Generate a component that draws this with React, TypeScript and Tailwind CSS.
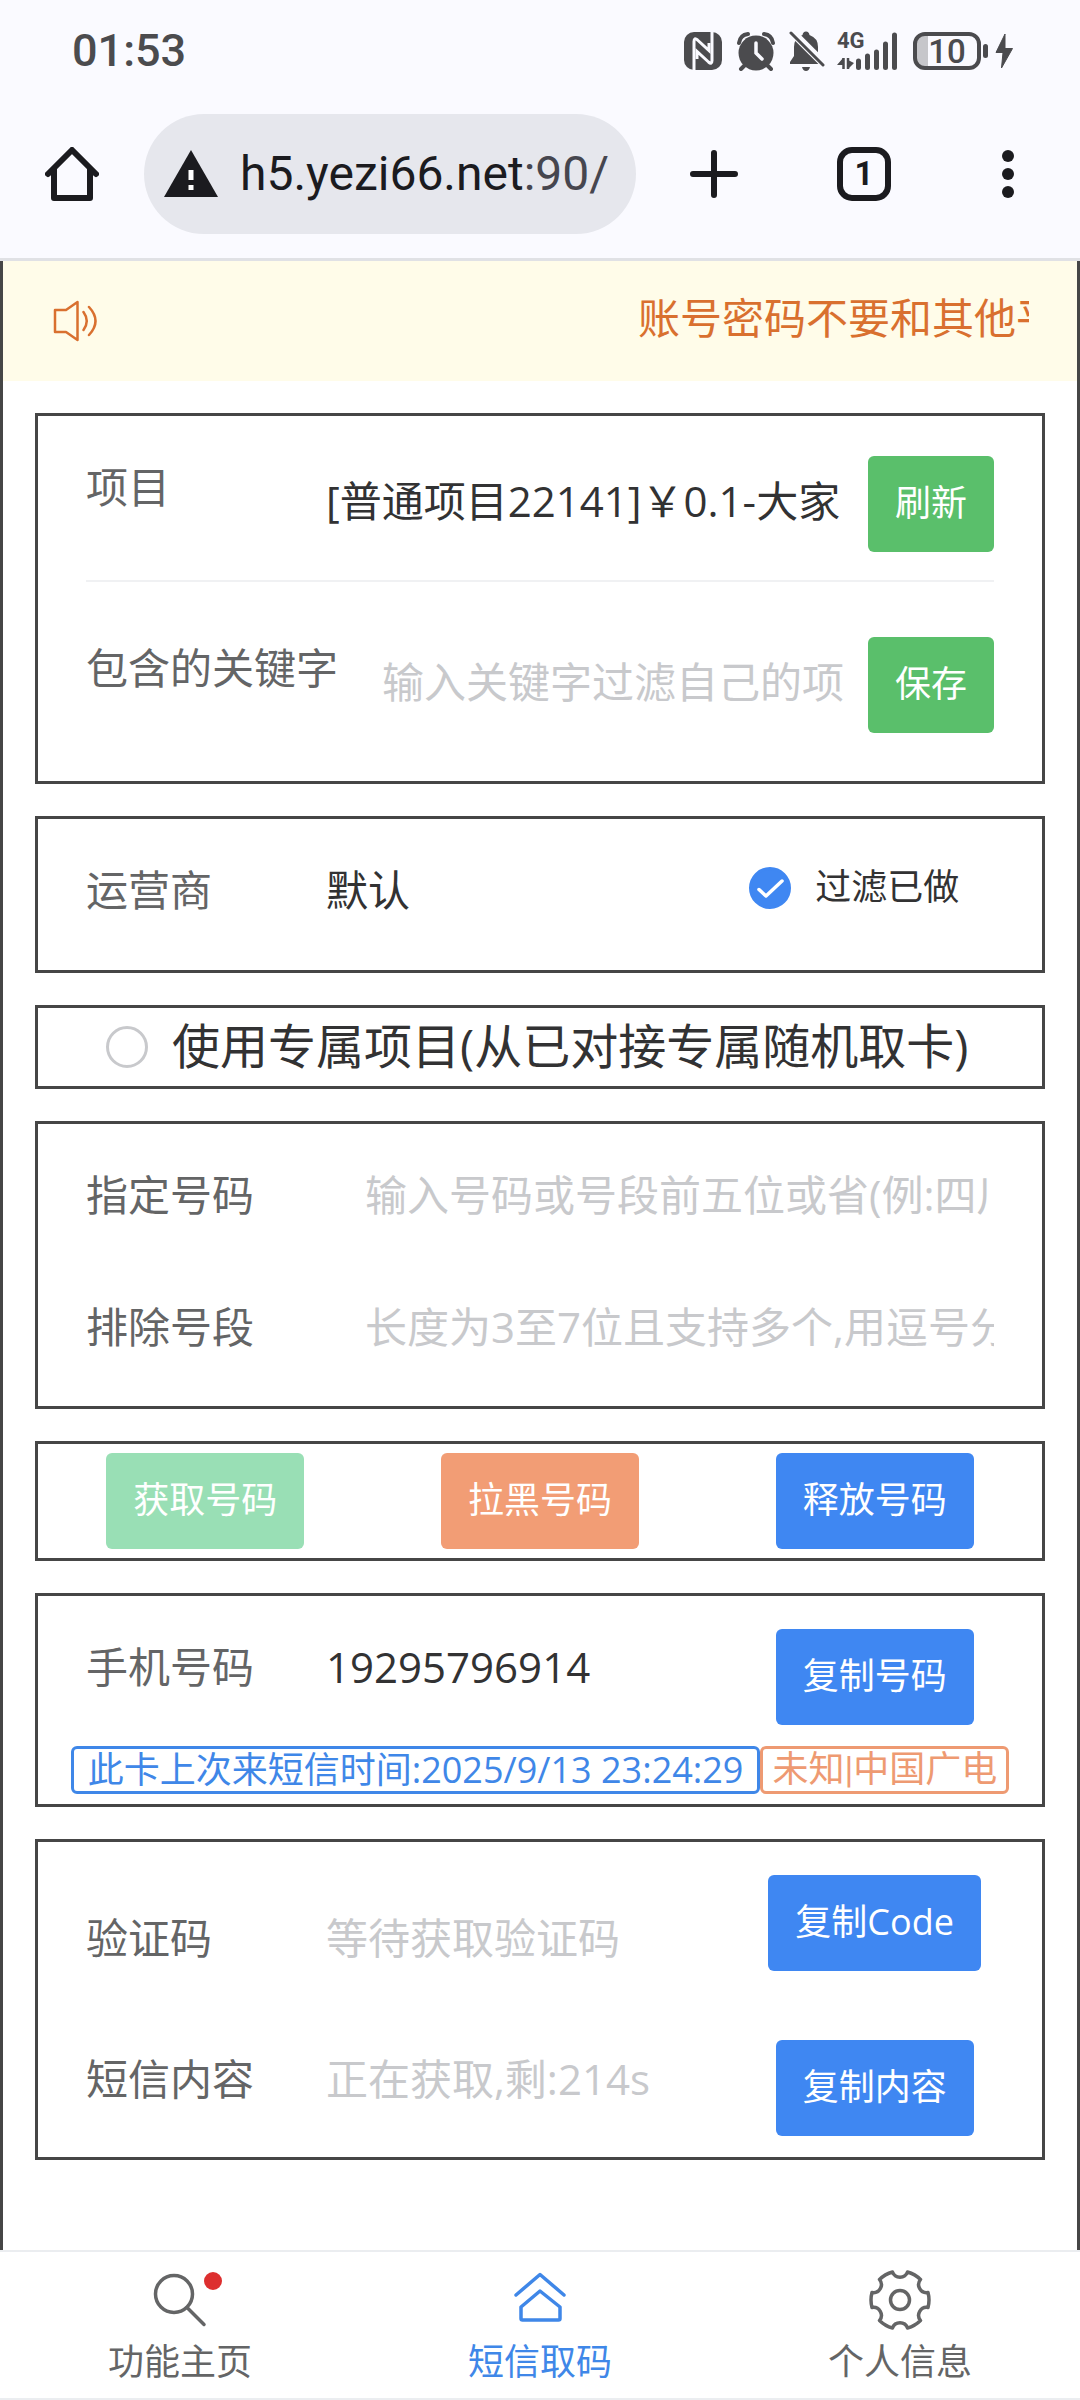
import React, { FunctionComponent, ReactNode, useState } from "react";

interface ChildrenProps {
  children: ReactNode;
}

interface ActionButtonProps {
  label: string;
  color: string;
  disabled?: boolean;
}

interface CheckProps {
  id: string;
  label: string;
  checked: boolean;
  onChange: () => void;
  textClass: string;
}

const labelClass = "shrink-0 text-[42px] text-[#646566]";
const inputClass =
  "min-w-0 flex-1 bg-transparent text-[42px] text-[#323233] outline-none placeholder:text-[#c8c9cc] placeholder:opacity-100";
const selectClass =
  "min-w-0 flex-1 appearance-none overflow-hidden bg-transparent text-[42px] text-[#323233] outline-none";

const StatusBar: FunctionComponent = () => (
  <div className="flex h-[102px] items-center pl-[72px] pr-[66px] text-[#4b4b4e]">
    <div className="text-[45px] font-medium">01:53</div>
    <div className="ml-auto flex items-center">
      {/* nfc */}
      <svg className="h-[38px] w-[40px]" viewBox="0 0 40 38" fill="none">
        <rect x="1" y="0" width="38" height="38" rx="10" fill="currentColor" />
        <path
          d="M11 39V9.500Q11 5 14.500 8L26 18.500V11"
          stroke="#fafaff"
          strokeWidth="3"
        />
        <path
          d="M29 -1V28.500Q29 33 25.500 30L14 19.500V27"
          stroke="#fafaff"
          strokeWidth="3"
        />
      </svg>
      {/* alarm clock */}
      <svg
        className="ml-[14px] h-[40px] w-[38px]"
        viewBox="0 0 38 40"
        fill="none"
      >
        <circle cx="19" cy="22" r="17.500" fill="currentColor" />
        <path
          d="M2 12Q3 4 11 3M36 12Q35 4 27 3M8 34L4 38M30 34L34 38"
          stroke="currentColor"
          strokeWidth="4"
          strokeLinecap="round"
        />
        <path
          d="M19 12V22L25 28"
          stroke="#fafaff"
          strokeWidth="3.500"
          strokeLinecap="round"
        />
      </svg>
      {/* muted bell */}
      <svg
        className="ml-[14px] h-[42px] w-[36px]"
        viewBox="0 0 36 42"
        fill="none"
      >
        <path
          d="M13.500 5Q14 1.500 17 1.500T20.500 5Q29 8 29 17V26L33 32V34H1V32L5 26V17Q5 8 13.500 5Z"
          fill="currentColor"
        />
        <path d="M13 37H21Q20 41 17 41T13 37Z" fill="currentColor" />
        <path d="M0 -1L36 35" stroke="#fafaff" strokeWidth="8" />
        <path
          d="M2 3L34 35"
          stroke="currentColor"
          strokeWidth="3"
          strokeLinecap="round"
        />
      </svg>
      {/* signal */}
      <div className="relative ml-3">
        <svg
          className="h-[38px] w-[62px]"
          viewBox="0 0 62 38"
          fill="none"
          stroke="currentColor"
        >
          <path
            d="M21.500 29V35.500M30.500 24V35.500M39.500 20V35.500M48.500 12V35.500M57.500 3V35.500"
            strokeWidth="5"
            strokeLinecap="round"
          />
          <path d="M6.500 37V26M11 26V37" strokeWidth="2.500" />
          <path
            d="M0 33L6 26V33ZM17 31L11 37V28Z"
            fill="currentColor"
            stroke="none"
          />
        </svg>
        <span className="absolute -top-px left-0 text-[22px] font-bold leading-5">
          4G
        </span>
      </div>
      {/* battery */}
      <div className="ml-[14px] flex h-[38px] w-[68px] items-center overflow-hidden rounded-[12px] border-4 border-[#4b4b4e] bg-linear-to-r from-[#c6c6ca] from-18% to-transparent to-18%">
        <span className="w-full text-center text-[33px] font-medium leading-none">
          10
        </span>
      </div>
      <svg
        className="ml-[2px] h-[38px] w-[31px]"
        viewBox="0 0 31 38"
        fill="currentColor"
      >
        <rect x="0" y="12" width="5" height="14" rx="2.500" />
        <path
          d="M22 2L13 20.500H20L18.500 36L29.500 16.500H22Z"
          stroke="currentColor"
          strokeLinejoin="round"
        />
      </svg>
    </div>
  </div>
);

const BrowserBar: FunctionComponent = () => (
  <div className="flex h-36 items-center px-[45px] text-[#1b1b1f]">
    <button aria-label="Home">
      <svg
        className="h-[54px] w-[54px]"
        viewBox="0 0 54 54"
        fill="none"
        stroke="currentColor"
        strokeWidth="6"
        strokeLinecap="round"
        strokeLinejoin="round"
      >
        <path d="M3 27L27 3L51 27M9 22V51H45V22" />
      </svg>
    </button>
    <button className="ml-[45px] flex h-[120px] min-w-0 flex-1 items-center rounded-full bg-[#e6e7ed] pl-5 pr-6 text-left">
      <svg className="h-12 w-[54px] shrink-0" viewBox="0 0 54 48">
        <path d="M27 0L54 47H0Z" fill="currentColor" />
        <path
          d="M24.500 20H29.500V30H24.500ZM24.500 35H29.500V40H24.500Z"
          fill="#fff"
        />
      </svg>
      <span className="ml-[22px] min-w-0 flex-1 overflow-hidden whitespace-nowrap text-[48px]">
        h5.yezi66.net<span className="text-[#46464f]">:90/</span>
      </span>
    </button>
    <button aria-label="New tab" className="ml-[51px]">
      <svg
        className="h-[54px] w-[54px]"
        viewBox="0 0 54 54"
        stroke="currentColor"
        strokeWidth="6"
        strokeLinecap="round"
      >
        <path d="M6 27H48M27 6V48" />
      </svg>
    </button>
    <button className="ml-24 h-[54px] w-[54px] rounded-[15px] border-6 border-[#1b1b1f] text-[33px] font-bold leading-[42px]">
      1
    </button>
    <button aria-label="Menu" className="ml-[90px]">
      <svg
        className="h-[54px] w-[54px]"
        viewBox="0 0 54 54"
        fill="currentColor"
      >
        <circle cx="27" cy="9" r="6" />
        <circle cx="27" cy="27" r="6" />
        <circle cx="27" cy="45" r="6" />
      </svg>
    </button>
  </div>
);

const NoticeBar: FunctionComponent = () => (
  <div className="flex h-[120px] items-center justify-between bg-[#fffce9] px-12 text-[#d9702f]">
    <svg
      className="h-12 w-12"
      viewBox="0 0 48 48"
      fill="none"
      stroke="currentColor"
      strokeWidth="2.500"
      strokeLinecap="round"
      strokeLinejoin="round"
    >
      <path d="M4 13H15L26.500 5V43L15 35H4Z" />
      <path d="M32.500 15Q39 24 32.500 33M38 10Q51 24 38 38" />
    </svg>
    <div className="w-[391px] overflow-hidden whitespace-nowrap pb-2 text-[42px]">
      账号密码不要和其他平台相同
    </div>
  </div>
);

const Card: FunctionComponent<ChildrenProps> = ({ children }) => (
  <section className="border-3 border-[#464646]">{children}</section>
);

const ActionButton: FunctionComponent<ActionButtonProps> = ({
  label,
  color,
  disabled,
}) => (
  <button
    className={`h-24 shrink-0 rounded-md px-[27px] pb-[2px] text-[36px] text-white ${color}`}
    disabled={disabled}
  >
    {label}
  </button>
);

const RoundCheck: FunctionComponent<CheckProps> = ({
  id,
  label,
  checked,
  onChange,
  textClass,
}) => (
  <div className="flex items-center">
    <span className="grid">
      <input
        id={id}
        type="checkbox"
        checked={checked}
        onChange={onChange}
        className="col-start-1 row-start-1 h-[42px] w-[42px] appearance-none rounded-full border-3 border-[#c8c9cc] checked:border-[#3f87f2] checked:bg-[#3f87f2]"
      />
      {checked && (
        <svg
          className="pointer-events-none col-start-1 row-start-1 h-[42px] w-[42px]"
          viewBox="0 0 42 42"
          fill="none"
          stroke="#fff"
          strokeWidth="3.500"
          strokeLinecap="round"
          strokeLinejoin="round"
        >
          <path d="M10 22.500L17 29L33 14" />
        </svg>
      )}
    </span>
    <label htmlFor={id} className={`pb-[2px] pl-6 text-[#323233] ${textClass}`}>
      {label}
    </label>
  </div>
);

const TabBar: FunctionComponent = () => {
  const listTabs = [
    {
      name: "功能主页",
      color: "text-[#646566]",
      dot: true,
      icon: (
        <>
          <circle cx="26" cy="26" r="18.500" />
          <path d="M39 39.500L56 56.500" />
        </>
      ),
    },
    {
      name: "短信取码",
      color: "text-[#3f87e8]",
      dot: false,
      icon: (
        <path d="M8 27L32 6.500L56 27M32 23L13 39V50.500Q13 52 14.500 52H50.500Q52 52 52 50.500V39Z" />
      ),
    },
    {
      name: "个人信息",
      color: "text-[#646566]",
      dot: false,
      icon: (
        <>
          <circle cx="32" cy="32" r="9.500" />
          <path d="M60 24.500A29 29 0 0 1 60 39.500A8 8 0 0 0 52.500 52.500A29 29 0 0 1 39.500 60A8 8 0 0 0 24.500 60A29 29 0 0 1 11.500 52.500A8 8 0 0 0 4 39.500A29 29 0 0 1 4 24.500A8 8 0 0 0 11.500 11.500A29 29 0 0 1 24.500 4A8 8 0 0 0 39.500 4A29 29 0 0 1 52.500 11.500A8 8 0 0 0 60 24.500Z" />
        </>
      ),
    },
  ];

  return (
    <nav className="grid h-[150px] grid-cols-3 border-y-2 border-[#ebedf0] bg-white">
      {listTabs.map((element, index) => (
        <a
          key={index}
          href="#"
          className={`flex flex-col items-center pt-4 ${element.color}`}
        >
          <span className="relative">
            <svg
              className="h-16 w-16"
              viewBox="0 0 64 64"
              fill="none"
              stroke="currentColor"
              strokeWidth="3.500"
              strokeLinecap="round"
              strokeLinejoin="round"
            >
              {element.icon}
            </svg>
            {element.dot && (
              <span className="absolute -right-[10px] top-1 h-[18px] w-[18px] rounded-full bg-[#dd2f2f]" />
            )}
          </span>
          <span className="mt-[6px] text-[36px] leading-[48px]">
            {element.name}
          </span>
        </a>
      ))}
    </nav>
  );
};

const App: FunctionComponent = () => {
  const [filterDone, setFilterDone] = useState(true);
  const [exclusive, setExclusive] = useState(false);

  return (
    <div className="flex min-h-screen flex-col bg-white font-['Open_Sans','Noto_Sans_CJK_SC',sans-serif]">
      <header className="border-b-3 border-[#e0e1e5] bg-[#fafaff] pb-3 font-[Roboto,sans-serif]">
        <StatusBar />
        <BrowserBar />
      </header>

      <main className="flex-1 border-x-3 border-[#464646]">
        <NoticeBar />
        <div className="flex flex-col gap-8 p-8">
          <Card>
            <div className="px-12">
              <div className="flex items-start border-b-2 border-[#f0f1f3] pb-7 pt-10">
                <label
                  htmlFor="project"
                  className={`w-[240px] leading-[62px] ${labelClass}`}
                >
                  项目
                </label>
                <select id="project" className={`h-[88px] ${selectClass}`}>
                  <option>[普通项目22141]￥0.1-大家</option>
                </select>
                <div className="flex pl-[22px]">
                  <ActionButton label="刷新" color="bg-[#5abf6b]" />
                </div>
              </div>
              <div className="flex items-start pb-12 pt-[55px]">
                <label
                  htmlFor="keyword"
                  className={`w-[296px] leading-[62px] ${labelClass}`}
                >
                  包含的关键字
                </label>
                <input
                  id="keyword"
                  className={`h-[88px] ${inputClass}`}
                  placeholder="输入关键字过滤自己的项目"
                />
                <div className="flex pl-[22px]">
                  <ActionButton label="保存" color="bg-[#5abf6b]" />
                </div>
              </div>
            </div>
          </Card>

          <Card>
            <div className="grid grid-cols-3 pb-[45px] pt-[34px]">
              <div className="col-span-2 flex h-[72px] items-center pl-12">
                <label
                  htmlFor="operator"
                  className={`w-[240px] ${labelClass}`}
                >
                  运营商
                </label>
                <select id="operator" className={selectClass}>
                  <option>默认</option>
                </select>
              </div>
              <div className="flex h-[70px] items-center pl-[42px]">
                <RoundCheck
                  id="filter-done"
                  label="过滤已做"
                  checked={filterDone}
                  onChange={() => setFilterDone(!filterDone)}
                  textClass="text-[36px]"
                />
              </div>
            </div>
          </Card>

          <Card>
            <div className="flex h-[78px] items-center pl-[68px]">
              <RoundCheck
                id="exclusive"
                label="使用专属项目(从已对接专属随机取卡)"
                checked={exclusive}
                onChange={() => setExclusive(!exclusive)}
                textClass="whitespace-nowrap text-[48px]"
              />
            </div>
          </Card>

          <Card>
            <div className="px-12 pb-[14px] pt-1">
              <div className="flex h-[132px] items-center">
                <label
                  htmlFor="number"
                  className={`w-[279px] ${labelClass}`}
                >
                  指定号码
                </label>
                <input
                  id="number"
                  className={inputClass}
                  placeholder="输入号码或号段前五位或省(例:四川)"
                />
              </div>
              <div className="flex h-[132px] items-center">
                <label
                  htmlFor="exclude"
                  className={`w-[279px] ${labelClass}`}
                >
                  排除号段
                </label>
                <input
                  id="exclude"
                  className={inputClass}
                  placeholder="长度为3至7位且支持多个,用逗号分隔"
                />
              </div>
            </div>
          </Card>

          <Card>
            <div className="grid grid-cols-3 justify-items-center py-[9px]">
              <ActionButton label="获取号码" color="bg-[#99dfb5]" disabled />
              <ActionButton label="拉黑号码" color="bg-[#f29d75]" />
              <ActionButton label="释放号码" color="bg-[#3f87f2]" />
            </div>
          </Card>

          <Card>
            <div className="grid grid-cols-3 pt-[33px]">
              <div className="col-span-2 flex h-[74px] items-center pl-12">
                <label htmlFor="phone" className={`w-[240px] ${labelClass}`}>
                  手机号码
                </label>
                <input
                  id="phone"
                  className={inputClass}
                  defaultValue="19295796914"
                />
              </div>
              <div className="flex justify-center">
                <ActionButton label="复制号码" color="bg-[#3f87f2]" />
              </div>
            </div>
            <div className="mt-[21px] flex justify-center whitespace-nowrap pb-[10px] text-[36px] leading-[42px]">
              <span className="rounded-md border-3 border-[#3f87e8] px-[14px] text-[#3f87e8]">
                此卡上次来短信时间:2025/9/13 23:24:29
              </span>
              <span className="rounded-md border-3 border-[#ee9a72] px-[9px] font-[Roboto,'Noto_Sans_CJK_SC',sans-serif] text-[#ee9a72]">
                未知|中国广电
              </span>
            </div>
          </Card>

          <Card>
            <div className="grid grid-cols-3">
              <div className="col-span-2 flex flex-col gap-[69px] pl-12 pt-[59px]">
                <div className="flex h-[72px] items-center">
                  <label htmlFor="code" className={`w-[240px] ${labelClass}`}>
                    验证码
                  </label>
                  <input
                    id="code"
                    className={inputClass}
                    placeholder="等待获取验证码"
                  />
                </div>
                <div className="flex h-[72px] items-center">
                  <label
                    htmlFor="content"
                    className={`w-[240px] ${labelClass}`}
                  >
                    短信内容
                  </label>
                  <input
                    id="content"
                    className={inputClass}
                    placeholder="正在获取,剩:214s"
                  />
                </div>
              </div>
              <div className="flex flex-col items-center gap-[69px] pb-[21px] pt-[33px]">
                <ActionButton label="复制Code" color="bg-[#3f87f2]" />
                <ActionButton label="复制内容" color="bg-[#3f87f2]" />
              </div>
            </div>
          </Card>
        </div>
      </main>

      <TabBar />
    </div>
  );
};

export default App;
